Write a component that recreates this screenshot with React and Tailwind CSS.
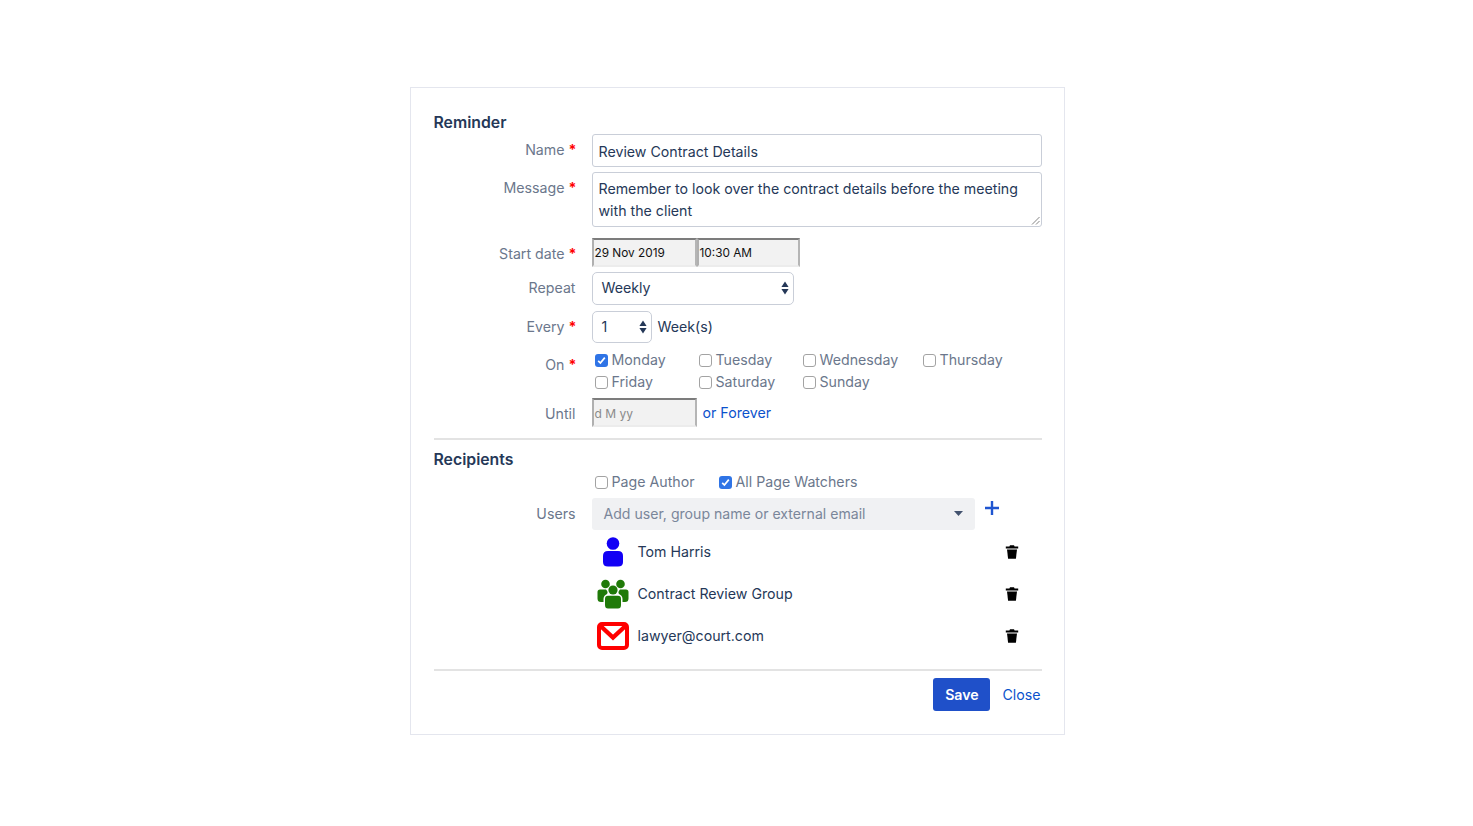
const F = "font-['Inter','Noto_Sans',sans-serif]";

function Label({ children, req, className = "" }) {
  return (
    <div className={"flex justify-end text-[14.2px] leading-[22px] text-[#6b778c] " + className}>
      <span>{children}</span>
      {req && <span className="ml-[4px] w-[7px] font-bold text-[#ff0000]">*</span>}
    </div>
  );
}

function Row({ label, req, labelClass = "", className = "", children }) {
  return (
    <div className={"grid grid-cols-[142px_1fr] gap-x-4 " + className}>
      <Label req={req} className={labelClass}>{label}</Label>
      <div>{children}</div>
    </div>
  );
}

function Updown() {
  return (
    <svg width="8" height="14" viewBox="0 0 8 14" className="shrink-0">
      <path d="M4 0.5 L7.6 6 H0.4 Z M0.4 8 H7.6 L4 13.5 Z" fill="#253858" />
    </svg>
  );
}

function Check({ checked, children, className = "" }) {
  return (
    <div className={"flex items-center text-[14.2px] leading-[22px] text-[#6b778c] " + className}>
      {checked ? (
        <span className="mr-[4px] flex h-[13px] w-[13px] items-center justify-center rounded-[3px] bg-[#2f74e6]">
          <svg width="9" height="9" viewBox="0 0 9 9">
            <path d="M1.2 4.8 L3.4 7 L7.8 1.6" fill="none" stroke="#fff" strokeWidth="1.7" />
          </svg>
        </span>
      ) : (
        <span className="mr-[4px] h-[13px] w-[13px] rounded-[3px] border border-[#a3a3a3] bg-white" />
      )}
      <span>{children}</span>
    </div>
  );
}

function Trash() {
  return (
    <svg width="14" height="14" viewBox="0 0 14 14" className="shrink-0">
      <path d="M5 0.3 H9 L9.6 1.6 H13.2 V3.6 H0.8 V1.6 H4.4 Z" fill="#000" />
      <path d="M2 4.6 H12 L10.9 13.7 H3.1 Z" fill="#000" />
    </svg>
  );
}

function Person() {
  return (
    <svg width="32" height="30" viewBox="0 0 32 30">
      <circle cx="16" cy="6.5" r="6.3" fill="#1200f5" />
      <path d="M11 14 H21 Q26 14 26 19 V25 Q26 29.5 21 29.5 H11 Q6 29.5 6 25 V19 Q6 14 11 14 Z" fill="#1200f5" />
    </svg>
  );
}

function Group() {
  return (
    <svg width="32" height="30" viewBox="0 0 32 30">
      <g fill="#1f7a08">
        <circle cx="8.5" cy="5" r="4.3" />
        <circle cx="23.5" cy="5" r="4.3" />
        <path d="M3 10.5 H9 Q11.5 13 10 15 Q6.5 16.5 6.5 20 V23 H4 Q0.5 23 0.5 19.5 V13 Q0.5 10.5 3 10.5 Z" />
        <path d="M29 10.5 H23 Q20.5 13 22 15 Q25.5 16.5 25.5 20 V23 H28 Q31.5 23 31.5 19.5 V13 Q31.5 10.5 29 10.5 Z" />
        <circle cx="16" cy="11" r="4.6" />
        <path d="M11 16.8 H21 Q24 16.8 24 20 V26 Q24 29.5 21 29.5 H11 Q8 29.5 8 26 V20 Q8 16.8 11 16.8 Z" />
      </g>
    </svg>
  );
}

function Mail() {
  return (
    <svg width="32" height="28" viewBox="0 0 32 28">
      <rect x="2" y="2" width="28" height="24" rx="3" fill="#fff" stroke="#ff0000" strokeWidth="4" />
      <path d="M2.5 3 L16 15.5 L29.5 3" fill="none" stroke="#ff0000" strokeWidth="4.4" />
    </svg>
  );
}

function Recipient({ icon, name, className = "" }) {
  return (
    <div className={"flex h-[30px] items-center " + className}>
      <div className="flex w-[46px] justify-start pl-[5px]">{icon}</div>
      <div className="w-[367px] text-[14.2px] text-[#253858]">{name}</div>
      <Trash />
    </div>
  );
}

const dateBox =
  "flex items-center border-2 border-t-[#7c7c7c] border-l-[#b0b0b0] border-r-[#b5b5b5] border-b-[#ececec] bg-[#f2f2f2] pl-[1px] pt-[2px] text-[11.8px] text-[#111]";

export default function App() {
  return (
    <div className={"flex h-[826px] w-full justify-center bg-white pt-[87px] pl-[1px] " + F}>
      <div className="h-[648px] w-[655px] border border-[#e4e6ee] bg-white pl-[23px] pr-[22px] pt-[24px]">
        <h2 className="h-[22px] text-[15.8px] font-semibold leading-[22px] text-[#253858]">Reminder</h2>

        <Row label="Name" req labelClass="pt-[5px]">
          <div className="flex h-[33px] items-center rounded-[3px] border border-[#c9ced8] pl-[6px] pt-[2px] text-[14.2px] text-[#253858]">
            Review Contract Details
          </div>
        </Row>

        <Row label="Message" req className="mt-[5px]" labelClass="pt-[5px]">
          <div className="relative h-[55px] rounded-[3px] border border-[#c9ced8] pl-[6px] pt-[5px] text-[14.2px] leading-[22px] text-[#253858]">
            <div>Remember to look over the contract details before the meeting</div>
            <div>with the client</div>
            <svg width="9" height="9" viewBox="0 0 9 9" className="absolute bottom-[1px] right-[1px]">
              <path d="M1 8.5 L8.5 1 M5 8.5 L8.5 5" stroke="#777" strokeWidth="0.9" />
            </svg>
          </div>
        </Row>

        <Row label="Start date" req className="mt-[11px]" labelClass="pt-[5px]">
          <div className="flex h-[29px]">
            <div className={"w-[105px] " + dateBox}>29 Nov 2019</div>
            <div className={"w-[103px] " + dateBox}>10:30 AM</div>
          </div>
        </Row>

        <Row label="Repeat" className="mt-[5px]" labelClass="pt-[5px]">
          <div className="flex h-[33px] w-[202px] items-center justify-between rounded-[5px] border border-[#c9ced8] pb-[1px] pl-[9px] pr-[4px] text-[14.2px] text-[#253858]">
            <span>Weekly</span>
            <Updown />
          </div>
        </Row>

        <Row label="Every" req className="mt-[6px]" labelClass="pt-[5px]">
          <div className="flex items-center">
            <div className="flex h-[32px] w-[60px] items-center justify-between rounded-[5px] border border-[#c9ced8] pl-[9px] pr-[4px] text-[14.2px] text-[#253858]">
              <span>1</span>
              <Updown />
            </div>
            <span className="ml-[6px] text-[14.2px] text-[#253858]">Week(s)</span>
          </div>
        </Row>

        <Row label="On" req className="mt-[6px]" labelClass="pt-[5px]">
          <div className="grid grid-cols-[104px_104px_120px_1fr] pl-[3px]">
            <Check checked>Monday</Check>
            <Check>Tuesday</Check>
            <Check>Wednesday</Check>
            <Check>Thursday</Check>
            <Check>Friday</Check>
            <Check>Saturday</Check>
            <Check>Sunday</Check>
          </div>
        </Row>

        <Row label="Until" className="mt-[5px]" labelClass="pt-[5px]">
          <div className="flex h-[29px] items-center">
            <div className={"h-[29px] w-[105px] !text-[12px] !text-[#8a8a8a] " + dateBox}>d M yy</div>
            <span className="ml-[6px] text-[14.2px] text-[#0b52cc]">or Forever</span>
          </div>
        </Row>

        <div className="mt-[11px] h-[2px] bg-[#e3e3e3]" />

        <h2 className="mt-[9px] h-[22px] text-[15.8px] font-semibold leading-[22px] text-[#253858]">Recipients</h2>

        <div className="pl-[161px]">
          <div className="flex h-[22px]">
            <Check className="w-[124px]">Page Author</Check>
            <Check checked>All Page Watchers</Check>
          </div>
        </div>

        <Row label="Users" className="mt-[5px]" labelClass="pt-[5px]">
          <div className="flex items-start">
            <div className="flex h-[32px] w-[383px] items-center justify-between rounded-[3px] bg-[#f0f1f3] pb-[1px] pl-[12px] pr-[12px] text-[14.1px] text-[#7a869a]">
              <span>Add user, group name or external email</span>
              <svg width="9" height="5" viewBox="0 0 9 5">
                <path d="M0 0 H9 L4.5 5 Z" fill="#42526e" />
              </svg>
            </div>
            <svg width="14" height="14" viewBox="0 0 14 14" className="ml-[10px] mt-[3px]">
              <path d="M7 0 V14 M0 7 H14" stroke="#1f55d0" strokeWidth="2.4" />
            </svg>
          </div>
        </Row>

        <div className="pl-[158px] pt-[7px]">
          <Recipient icon={<Person />} name="Tom Harris" />
          <Recipient icon={<Group />} name="Contract Review Group" className="mt-[12px]" />
          <Recipient icon={<Mail />} name="lawyer@court.com" className="mt-[12px]" />
        </div>

        <div className="mt-[18px] h-[2px] bg-[#e3e3e3]" />

        <div className="mt-[7px] flex items-center justify-end pr-[1px]">
          <div className="flex h-[33px] w-[57px] items-center justify-center rounded-[3px] bg-[#1f50c9] text-[14.2px] font-semibold text-white">
            Save
          </div>
          <span className="ml-[12px] text-[14.2px] text-[#0b52cc]">Close</span>
        </div>
      </div>
    </div>
  );
}
